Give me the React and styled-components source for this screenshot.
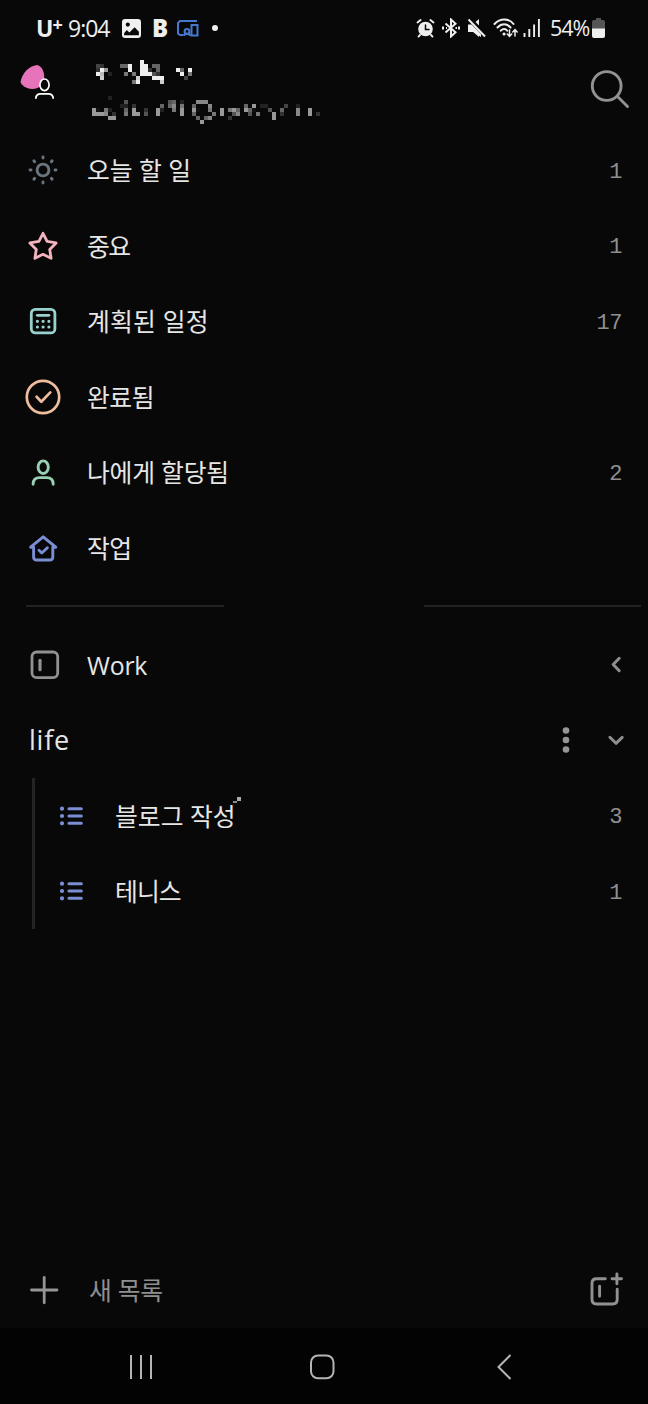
import React from 'react';
import styled, { createGlobalStyle } from 'styled-components';

const NAME_PIXELS = [
    '...........e',
    '43....66e..ee.66',
    '3e9.....e..ee3.6....e6.e',
    'eb.2...7.7.eee53.....e.7',
    '.c........c...eee.....4',
    '.........7e.....c',
];

const EMAIL_PIXELS = [
    '....2',
    '........5..........56.2...888',
    '.......22.3......6.68.7..6...8........6.9.22....4..2',
    '91.72...6.9..3..92..7.9..91..7..9.796.961...5..6...8..9',
    '9998.3..7.99.5..9.....9..6....7.9..58..5.7...9.3...8..9.3',
    '....99....................6.68....3..........9',
    '...........................9',
];

const MENU = [
    { icon: 'sun', label: '오늘 할 일', count: '1', track: 0 },
    { icon: 'star', label: '중요', count: '1', track: -1.5 },
    { icon: 'planned', label: '계획된 일정', count: '17', track: 0.2 },
    { icon: 'done', label: '완료됨', track: -0.5 },
    { icon: 'person', label: '나에게 할당됨', count: '2', track: -0.2 },
    { icon: 'home', label: '작업', track: -0.5 },
];

const LISTS = [
    { label: '블로그 작성', count: '3', track: 0, marked: true },
    { label: '테니스', count: '1', track: -0.9 },
];

const Pixels = ({ rows }) => (
    <PixelSvg width="228" height={rows.length * 4} shapeRendering="crispEdges">
        {rows.map((row, y) => row.split('').map((v, x) => (
            v === '.' ? null : <rect key={`${x}-${y}`} x={x * 4} y={y * 4} width="4" height="4" fill={`#${v.repeat(6)}`} />
        )))}
    </PixelSvg>
);

const MenuIcon = ({ name }) => {
    switch (name) {
        case 'sun':
            return (
                <LineIcon width="36" height="36" $color="#6a7580" $stroke={2.9}>
                    <circle cx="18" cy="18" r="5.9" />
                    <path d="M18 5v1M18 30v1M5 18h1M30 18h1M8.9 8.9l.7.7M26.4 26.4l.7.7M27.1 8.9l-.7.7M9.6 26.4l-.7.7" />
                </LineIcon>
            );
        case 'star':
            return (
                <LineIcon width="36" height="36" $color="#f4b3be" $stroke={2.8}>
                    <path d="M18 5.3l4.1 8.1 9 1.5-6.4 6.5 1.4 8.9-8.1-4-8.1 4 1.4-8.9-6.4-6.500 9-1.500z" />
                </LineIcon>
            );
        case 'planned':
            return (
                <LineIcon width="36" height="36" $color="#98d1cd" $stroke={2.8}>
                    <rect x="6.3" y="6.3" width="23.600" height="23.600" rx="4" />
                    <path d="M12.3 12.3h11.6" />
                    <path d="M12.4 18.3h.01M18.1 18.3h.01M23.9 18.3h.01M12.4 24h.01M18.1 24h.01M23.9 24h.01" strokeWidth="3.2" />
                </LineIcon>
            );
        case 'done':
            return (
                <LineIcon width="36" height="36" $color="#eebd9e" $stroke={2.7}>
                    <circle cx="18" cy="18" r="16.2" />
                    <path d="M11.6 17.8l4.7 4.9 9-9.3" />
                </LineIcon>
            );
        case 'person':
            return (
                <LineIcon width="36" height="36" $color="#98d0b4" $stroke={2.9}>
                    <ellipse cx="18.2" cy="13.2" rx="5.1" ry="6.3" />
                    <path d="M8.1 30.2c0-4.6 2.8-6.6 6.6-6.6h6.9c3.8 0 6.6 2 6.6 6.6" />
                </LineIcon>
            );
        case 'home':
            return (
                <LineIcon width="36" height="36" $color="#7a8ed4" $stroke={2.9}>
                    <path d="M5.6 17.2h3V27c0 1.9 1.1 3 3 3h13.2c1.9 0 3-1.1 3-3v-9.8h3L18.2 6.8z" />
                    <path d="M14 20.3l2.8 2.7 5.6-5.2" />
                </LineIcon>
            );
        case 'group':
            return (
                <LineIcon width="36" height="36" $color="#919191" $stroke={2.8}>
                    <rect x="7" y="5" width="25.7" height="25.7" rx="4.6" />
                    <path d="M15 13.3v9.4" strokeWidth="3.2" />
                </LineIcon>
            );
        default:
            return null;
    }
};

const ListIcon = () => (
    <LineIcon width="26" height="22" $color="#7a8ed4" $stroke={3.1}>
        <path d="M10 3.700h12.300M10 11h12.300M10 18.300h12.300" />
        <path d="M3 3.700h.01M3 11h.01M3 18.300h.01" strokeWidth="4.200" />
    </LineIcon>
);

const StatusBar = () => (
    <Status>
        <StatusText $size={23} $weight={700} $width={25} $left={36}>U<Sup>+</Sup></StatusText>
        <StatusText $size={23} $weight={400} $width={44} $left={7}>9:04</StatusText>
        <StatusIcon $left={10} width="19" height="19" viewBox="0 0 18 18">
            <path fillRule="evenodd" fill="#f0f0f0" d="M3 0h12a3 3 0 013 3v12a3 3 0 01-3 3H3a3 3 0 01-3-3V3a3 3 0 013-3zM2 15.500h14V12l-4-4.300-5 5-2.500-2.200L2 13.500zM5.500 3.300a2 2 0 100 4 2 2 0 000-4z" />
        </StatusIcon>
        <StatusText $size={24} $weight={800} $width={15} $left={11}>B</StatusText>
        <StatusIcon $left={9} width="23" height="18" fill="none" stroke="#4479cf" strokeWidth="2">
            <path d="M21 2H4L2 4v10.500l2 1.500h3" />
            <circle cx="11" cy="12.500" r="2.400" />
            <path d="M8 17c0-3 6-3 6 0" />
            <rect x="15.500" y="6" width="6" height="10.500" />
        </StatusIcon>
        <Dot />
        <StatusRight>
            <svg width="19" height="20" fill="none" stroke="#eee" strokeLinecap="round">
                <circle cx="9.500" cy="11" r="7.300" fill="#eee" stroke="none" />
                <path d="M1.500 4.500L4.600 2M17.500 4.500L14.400 2M4 17l-1.500 1.600M15 17l1.500 1.600" strokeWidth="1.900" />
                <path d="M9.500 7v4.500h3.500" stroke="#080808" strokeWidth="1.500" />
            </svg>
            <StatusIcon $left={7} width="18" height="20" fill="none" stroke="#eee" strokeWidth="2">
                <path d="M3.500 5.500l10 8.800-4.500 4.200V1.500l4.500 4.200-10 8.800" />
                <path d="M1 8.500v3M4 10h1M17 8.500v3M13.500 10h1.500" />
            </StatusIcon>
            <StatusIcon $left={7} width="19" height="20">
                <path fill="#eee" d="M1 7h4l7-6v18l-7-6H1z" />
                <path stroke="#080808" strokeWidth="5" d="M2 1l17 17" />
                <path fill="#eee" d="M1 6.500h3.500L14 16v3l-7.500-5H1z" />
                <path stroke="#eee" strokeWidth="2" d="M1.500 1.500L18 18.500" />
            </StatusIcon>
            <StatusIcon $left={7} width="26" height="20" fill="none" stroke="#eee" strokeWidth="2" strokeLinecap="round">
                <path d="M1.500 6c5.500-6 14.500-6 19 0M4.500 9.500c4-4.200 9.500-4.200 13 0M7.800 12.700c2-2.200 4.900-2.200 6.400 0" />
                <path d="M11 16h.1" strokeWidth="3" />
                <path d="M16.500 12v6M14.300 16l2.200 2.300 2.200-2.300M22 18v-6M19.800 14l2.200-2.300 2.200 2.300" strokeWidth="1.500" />
            </StatusIcon>
            <StatusIcon $left={4.5} width="18" height="20" stroke="#eee" strokeWidth="1.900">
                <path d="M1.500 15v4M6.300 11v8M11.100 6.500V19M15.900 1v18" />
            </StatusIcon>
            <StatusText $size={21.5} $weight={400} $width={41} $left={9}>54%</StatusText>
            <StatusIcon $left={1} width="13" height="20">
                <path fill="#555" d="M4 0h5v2h2a2 2 0 012 2v7H0V4a2 2 0 012-2h2z" />
                <path fill="#eee" d="M0 10.500h13V18a2 2 0 01-2 2H2a2 2 0 01-2-2z" />
            </StatusIcon>
        </StatusRight>
    </Status>
);

const App = () => (
    <Screen>
        <GlobalStyle />
        <StatusBar />
        <Header>
            <svg width="38" height="42" fill="none">
                <path fill="#e773bb" d="M.5 20C2 11 9 4 17 3c4 .5 7.600 6 7.200 13-.5 7-5 11-12.200 11C6 26.500 1.500 23.500.5 20z" />
                <ellipse cx="24.500" cy="22.800" rx="4.600" ry="5.800" fill="#080808" stroke="#fff" strokeWidth="1.700" />
                <path d="M15.800 36.800c0-3.600 2.200-5 5-5h7.400c2.800 0 5 1.400 5 5" stroke="#fff" strokeWidth="1.800" />
            </svg>
            <Account>
                <NameRow><Pixels rows={NAME_PIXELS} /></NameRow>
                <Pixels rows={EMAIL_PIXELS} />
            </Account>
            <SearchButton type="button">
                <LineIcon width="42" height="42" $color="#929292" $stroke={2.9}>
                    <circle cx="17.700" cy="18" r="14.400" />
                    <path d="M28.500 28.500l10 10" />
                </LineIcon>
            </SearchButton>
        </Header>
        <Menu>
            {MENU.map((item) => (
                <MenuRow key={item.icon}>
                    <MenuIcon name={item.icon} />
                    <Label $track={item.track}>{item.label}</Label>
                    <Count>{item.count}</Count>
                </MenuRow>
            ))}
        </Menu>
        <Divider><Line $width={198} /><Line $width={217} /></Divider>
        <MenuRow>
            <MenuIcon name="group" />
            <Label $track={-0.2}>Work</Label>
            <LineIcon width="18" height="18" $color="#8f8f8f" $stroke={3}>
                <path d="M14.200 2.300L8.200 8.500l6 6.200" />
            </LineIcon>
        </MenuRow>
        <GroupRow>
            <Label $track={0.8} $size={27}>life</Label>
            <MoreIcon width="8" height="28" fill="#969696">
                <circle cx="4" cy="4.500" r="3.300" />
                <circle cx="4" cy="14" r="3.300" />
                <circle cx="4" cy="23.500" r="3.300" />
            </MoreIcon>
            <LineIcon width="18" height="18" $color="#8f8f8f" $stroke={3}>
                <path d="M2.900 6.300L9 12.300l6.200-6" />
            </LineIcon>
        </GroupRow>
        <SubLists>
            {LISTS.map((item) => (
                <SubRow key={item.label}>
                    <ListIcon />
                    <Label $track={item.track}>
                        {item.label}
                        {item.marked && <Mark width="8" height="6" shapeRendering="crispEdges"><path fill="#aaa" d="M4 0h4v4H4z" /><path fill="#888" d="M0 4h4v2H0z" /></Mark>}
                    </Label>
                    <Count>{item.count}</Count>
                </SubRow>
            ))}
        </SubLists>
        <Footer>
            <LineIcon width="36" height="36" $color="#959595" $stroke={2.8}>
                <path d="M6.500 18h25.500M19.200 5.300v25.500" />
            </LineIcon>
            <Label $track={-0.3} $muted>새 목록</Label>
            <LineIcon width="36" height="38" $color="#919191" $stroke={2.9}>
                <path d="M18.300 7.800H9.500c-2.800 0-4.500 1.700-4.500 4.500v16.200C5 31.300 6.700 33 9.500 33h16.200c2.800 0 4.500-1.700 4.500-4.500V18.300" />
                <path d="M12.600 15.300v9.900M25 7.800h9.500M29.900 2.900v9.800" />
            </LineIcon>
        </Footer>
        <NavBar>
            <svg width="26" height="28" stroke="#b5b5b5" strokeWidth="2"><path d="M3 2v24M13 2v24M23 2v24" /></svg>
            <HomeIcon width="28" height="28" fill="none" stroke="#b5b5b5" strokeWidth="2"><rect x="3" y="2.500" width="22.500" height="22.800" rx="7" /></HomeIcon>
            <svg width="18" height="28" fill="none" stroke="#b5b5b5" strokeWidth="2"><path d="M15.500 2L3.500 14l12 12" /></svg>
        </NavBar>
    </Screen>
);

// Styled Components
const GlobalStyle = createGlobalStyle`
    body {
        margin: 0;
        background-color: #080808;
    }
    * {
        box-sizing: border-box;
    }
    svg {
        display: block;
        flex-shrink: 0;
    }
`;

const Screen = styled.div`
    width: 648px;
    height: 1404px;
    display: flex;
    flex-direction: column;
    overflow: hidden;
    background-color: #080808;
    color: #e8e8e8;
    font-family: "Open Sans", "Noto Sans CJK KR", sans-serif;
`;

const Status = styled.div`
    height: 56px;
    flex-shrink: 0;
    display: flex;
    align-items: center;
`;

const StatusText = styled.span`
    width: ${props => props.$width}px;
    margin-left: ${props => props.$left}px;
    font-size: ${props => props.$size}px;
    font-weight: ${props => props.$weight};
    line-height: 28px;
    letter-spacing: -1px;
    white-space: nowrap;
    color: #eeeeee;
`;

const Sup = styled.span`
    font-size: 18px;
    vertical-align: 6px;
    line-height: 0;
`;

const StatusIcon = styled.svg`
    margin-left: ${props => props.$left}px;
`;

const Dot = styled.span`
    width: 6px;
    height: 6px;
    margin-left: 13px;
    border-radius: 50%;
    background-color: #f0f0f0;
`;

const StatusRight = styled.div`
    display: flex;
    align-items: center;
    margin: 0 43px 0 auto;
`;

const Header = styled.div`
    height: 76.5px;
    flex-shrink: 0;
    display: flex;
    align-items: flex-start;
    padding: 6px 17px 0 20px;
`;

const Account = styled.div`
    display: flex;
    flex-direction: column;
    margin: -2px 0 0 34px;
`;

const NameRow = styled.div`
    height: 36px;
    padding-left: 4px;
`;

const PixelSvg = styled.svg`
    overflow: visible;
`;

const SearchButton = styled.button`
    margin: 6px 0 0 auto;
    padding: 0;
    border: none;
    background: none;
    cursor: pointer;
`;

const LineIcon = styled.svg`
    fill: none;
    stroke: ${props => props.$color};
    stroke-width: ${props => props.$stroke};
    stroke-linecap: round;
    stroke-linejoin: round;
`;

const Menu = styled.div`
    display: flex;
    flex-direction: column;
    height: 453px;
    flex-shrink: 0;
`;

const MenuRow = styled.div`
    height: 75.5px;
    flex-shrink: 0;
    display: flex;
    align-items: center;
    padding: 0 25px;
    gap: 26px;
`;

const Label = styled.span`
    position: relative;
    font-size: ${props => props.$size || 24.8}px;
    line-height: 36px;
    letter-spacing: ${props => props.$track}px;
    white-space: nowrap;
    margin-right: auto;
    color: ${props => props.$muted ? '#8f8f8f' : '#e6e6e6'};
`;

const Count = styled.span`
    padding: 4px 1px 0 0;
    font-family: "Liberation Mono", monospace;
    font-size: 22px;
    letter-spacing: -0.5px;
    color: #8f8f8f;
`;

const Divider = styled.div`
    height: 41.5px;
    flex-shrink: 0;
    display: flex;
    justify-content: space-between;
    padding: 19.5px 7px 0 26px;
`;

const Line = styled.div`
    width: ${props => props.$width}px;
    height: 2px;
    background-color: #222222;
`;

const GroupRow = styled.div`
    height: 75.5px;
    flex-shrink: 0;
    display: flex;
    align-items: center;
    padding: 0 23px 0 29px;
`;

const MoreIcon = styled.svg`
    margin-right: 37.5px;
`;

const SubLists = styled.div`
    flex-shrink: 0;
    margin-left: 32px;
    border-left: 3px solid #242424;
`;

const SubRow = styled.div`
    height: 75.5px;
    display: flex;
    align-items: center;
    padding: 0 25px 0 24px;
    gap: 30px;
`;

const Mark = styled.svg`
    position: absolute;
    top: -1px;
    right: -5px;
`;

const Footer = styled.div`
    height: 76px;
    flex-shrink: 0;
    display: flex;
    align-items: center;
    gap: 28px;
    margin-top: auto;
    padding: 0 25px 0 25px;
`;

const NavBar = styled.div`
    height: 76px;
    flex-shrink: 0;
    display: flex;
    align-items: center;
    justify-content: space-between;
    padding: 2px 135px 0 128px;
    background-color: #030303;
`;

const HomeIcon = styled.svg`
    margin-right: 5px;
`;

export default App;
